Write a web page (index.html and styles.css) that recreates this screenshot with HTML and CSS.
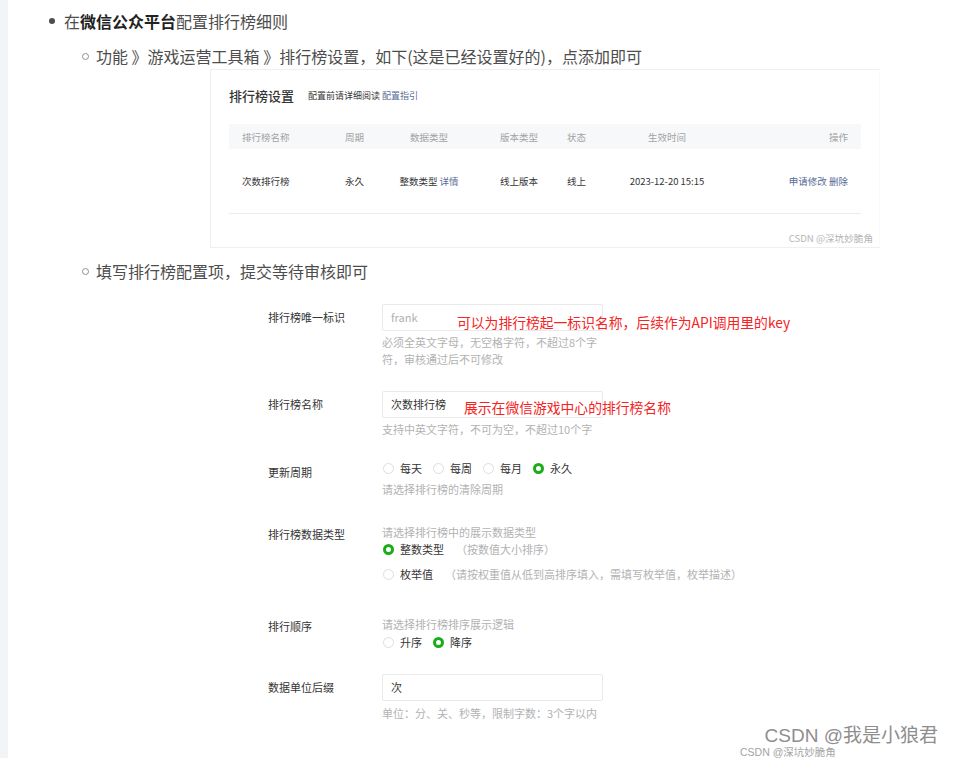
FILE: index.html
```html
<!DOCTYPE html>
<html lang="zh-CN">
<head>
  <meta charset="UTF-8">
  <meta name="viewport" content="width=device-width, initial-scale=1.0">
  <title>排行榜配置</title>
  <link rel="stylesheet" href="styles.css">
</head>
<body>

  <div class="page">
    <ul class="list">
      <li>
        <div class="line"><span class="dot"></span><span>在<strong>微信公众平台</strong>配置排行榜细则</span></div>

        <ul class="sublist">
          <!-- 排行榜设置截图 -->
          <li>
            <div class="line sub"><span class="circle"></span><span>功能 》游戏运营工具箱 》排行榜设置，如下(这是已经设置好的)，点添加即可</span></div>
            <div class="shot">
              <div class="shot-title">
                <span class="title">排行榜设置</span>
                <span class="title-note">配置前请详细阅读 <a class="link">配置指引</a></span>
              </div>
              <div class="table">
                <div class="tr thead">
                  <div class="td c1">排行榜名称</div>
                  <div class="td c2">周期</div>
                  <div class="td c3">数据类型</div>
                  <div class="td c4">版本类型</div>
                  <div class="td c5">状态</div>
                  <div class="td c6">生效时间</div>
                  <div class="td c7">操作</div>
                </div>
                <div class="tr tbody">
                  <div class="td c1">次数排行榜</div>
                  <div class="td c2">永久</div>
                  <div class="td c3">整数类型 <a class="link">详情</a></div>
                  <div class="td c4">线上版本</div>
                  <div class="td c5">线上</div>
                  <div class="td c6">2023-12-20 15:15</div>
                  <div class="td c7"><a class="link">申请修改</a> <a class="link">删除</a></div>
                </div>
              </div>
              <span class="shot-mark">CSDN @深坑妙脆角</span>
            </div>
          </li>

          <!-- 配置项表单截图 -->
          <li>
            <div class="line sub sub-second"><span class="circle"></span><span>填写排行榜配置项，提交等待审核即可</span></div>
            <div class="form">
              <div class="row">
                <div class="label">排行榜唯一标识</div>
                <div class="control">
                  <div class="field placeholder">frank
                    <span class="note note-key">可以为排行榜起一标识名称，后续作为API调用里的key</span>
                  </div>
                  <div class="hint">必须全英文字母，无空格字符，不超过8个字符，审核通过后不可修改</div>
                </div>
              </div>

              <div class="row">
                <div class="label">排行榜名称</div>
                <div class="control">
                  <div class="field">次数排行榜
                    <span class="note note-name">展示在微信游戏中心的排行榜名称</span>
                  </div>
                  <div class="hint">支持中英文字符，不可为空，不超过10个字</div>
                </div>
              </div>

              <div class="row">
                <div class="label label-radio">更新周期</div>
                <div class="control">
                  <div class="radios">
                    <span class="radio"><i class="dot-r"></i>每天</span>
                    <span class="radio"><i class="dot-r"></i>每周</span>
                    <span class="radio"><i class="dot-r"></i>每月</span>
                    <span class="radio"><i class="dot-r on"></i>永久</span>
                  </div>
                  <div class="hint hint-after">请选择排行榜的清除周期</div>
                </div>
              </div>

              <div class="row row-type">
                <div class="label label-hint">排行榜数据类型</div>
                <div class="control">
                  <div class="hint hint-top">请选择排行榜中的展示数据类型</div>
                  <div class="radios">
                    <span class="radio"><i class="dot-r on"></i>整数类型</span>
                    <span class="desc">（按数值大小排序）</span>
                  </div>
                  <div class="radios radios-next">
                    <span class="radio"><i class="dot-r"></i>枚举值</span>
                    <span class="desc">（请按权重值从低到高排序填入，需填写枚举值，枚举描述）</span>
                  </div>
                </div>
              </div>

              <div class="row row-order">
                <div class="label label-hint">排行顺序</div>
                <div class="control">
                  <div class="hint hint-top">请选择排行榜排序展示逻辑</div>
                  <div class="radios radios-order">
                    <span class="radio"><i class="dot-r"></i>升序</span>
                    <span class="radio"><i class="dot-r on"></i>降序</span>
                  </div>
                </div>
              </div>

              <div class="row row-unit">
                <div class="label">数据单位后缀</div>
                <div class="control">
                  <div class="field">次</div>
                  <div class="hint hint-unit">单位：分、关、秒等，限制字数：3个字以内</div>
                </div>
              </div>
            </div>
          </li>
        </ul>
      </li>
    </ul>

    <!-- Watermarks -->
    <span class="wm-big">CSDN @我是小狼君</span>
    <span class="wm-small">CSDN @深坑妙脆角</span>
  </div>

</body>
</html>
```

FILE: styles.css
```css
body {
  margin: 0;
  background-color: #f3f4f5;
  font-family: "Noto Sans CJK SC", "Noto Sans", sans-serif;
  color: #4d4d4d;
}

.page {
  position: relative;
  margin-left: 8px;
  height: 758px;
  padding-top: 8px;
  box-sizing: border-box;
  background-color: #fff;
  overflow: hidden;
}

/* Article lists */
.list,
.sublist {
  list-style: none;
  margin: 0;
  padding: 0;
}

.line {
  display: flex;
  align-items: center;
  height: 26px;
  padding-left: 41px;
  font-size: 16px;
  line-height: 26px;
  white-space: nowrap;
}

.line strong {
  color: #222;
  font-weight: 700;
}

.dot {
  width: 6px;
  height: 6px;
  margin-right: 9px;
  border-radius: 50%;
  background-color: #4d4d4d;
}

.line.sub {
  margin-top: 9px;
  padding-left: 74px;
}

.line.sub-second {
  margin-top: 10px;
}

.circle {
  width: 7px;
  height: 7px;
  margin-right: 7px;
  box-sizing: border-box;
  border: 1px solid #8f8f8f;
  border-radius: 50%;
}

/* Screenshot: 排行榜设置 */
.shot {
  position: relative;
  width: 670px;
  height: 179px;
  margin-left: 202px;
  padding: 15px 18px 0 18px;
  box-sizing: border-box;
  border: 1px solid #efefef;
  border-right-color: #fafafa;
  color: #353535;
}

.shot-title {
  display: flex;
  align-items: center;
  gap: 14px;
  height: 20px;
}

.title {
  font-size: 13px;
  font-weight: 500;
}

.title-note {
  font-size: 9px;
}

.link {
  color: #576b95;
}

.table {
  margin-top: 19px;
  width: 632px;
  font-size: 9.5px;
}

.tr {
  display: grid;
  grid-template-columns: 103px 48px 98px 76px 46px 134px 127px;
  align-items: center;
}

.thead {
  height: 25px;
  background-color: #f7f8fa;
  color: #a3a3a3;
}

.tbody {
  height: 64px;
  border-bottom: 1px solid #ececec;
}

.td {
  white-space: nowrap;
}

.c1, .c2, .c5 { padding-left: 13px; }
.c4 { padding-left: 22px; }
.c3, .c6 { text-align: center; }
.c7 { text-align: right; padding-right: 13px; }

.shot-mark {
  position: absolute;
  right: 6px;
  bottom: 2px;
  font-size: 9.6px;
  color: #b5b5b5;
}

/* Screenshot: 配置项表单 */
.form {
  display: flex;
  flex-direction: column;
  gap: 22px;
  margin-left: 260px;
  padding-top: 20px;
  color: #353535;
  font-size: 11px;
}

.row {
  display: flex;
}

.row:nth-child(2) { margin-top: 1.5px; }
.row-type { margin-top: 4px; }
.row-order { margin-top: 11px; }
.row-unit { margin-top: 1px; }

.label {
  width: 114px;
  line-height: 27px;
  white-space: nowrap;
}

.label-radio {
  line-height: 17px;
  padding-top: 4px;
}

.label-hint {
  line-height: 17px;
  padding-top: 2px;
}

.control {
  display: flex;
  flex-direction: column;
}

.field {
  position: relative;
  width: 221px;
  height: 27px;
  padding-left: 8px;
  box-sizing: border-box;
  border: 1px solid #e9e9e9;
  border-radius: 2px;
  line-height: 25px;
}

.field.placeholder {
  color: #b0b0b0;
}

.note {
  position: absolute;
  font-size: 13.8px;
  line-height: 20px;
  color: #f52323;
  white-space: nowrap;
}

.note-key {
  left: 74px;
  top: 7px;
}

.note-name {
  left: 81px;
  top: 5px;
}

.hint {
  width: 221px;
  margin-top: 2.5px;
  line-height: 17px;
  color: #b2b2b2;
}

.hint-top {
  margin-top: 0;
  width: auto;
}

.hint-after {
  margin-top: 4px;
}

.hint-unit {
  margin-top: 4px;
}

.radios {
  display: flex;
  align-items: center;
  height: 17px;
  white-space: nowrap;
}

.radios-next {
  margin-top: 8px;
}

.radios-order {
  margin-top: 1px;
}

.radio {
  display: flex;
  align-items: center;
  margin-right: 10px;
}

.dot-r {
  width: 11px;
  height: 11px;
  margin: 0 6px 0 1px;
  box-sizing: border-box;
  border: 1px solid #dedede;
  border-radius: 50%;
}

.dot-r.on {
  border: 3px solid #1aad19;
}

.desc {
  margin-left: 2px;
  color: #b2b2b2;
}

/* Page watermarks */
.wm-big,
.wm-small {
  position: absolute;
  font-family: "Liberation Sans", "Noto Sans CJK SC", sans-serif;
  white-space: nowrap;
}

.wm-big {
  right: 16px;
  top: 725px;
  font-size: 19px;
  line-height: 21px;
  color: #8e8e8e;
}

.wm-small {
  left: 732px;
  top: 746px;
  font-size: 10.5px;
  line-height: 12px;
  color: #a3a3a3;
}
```
